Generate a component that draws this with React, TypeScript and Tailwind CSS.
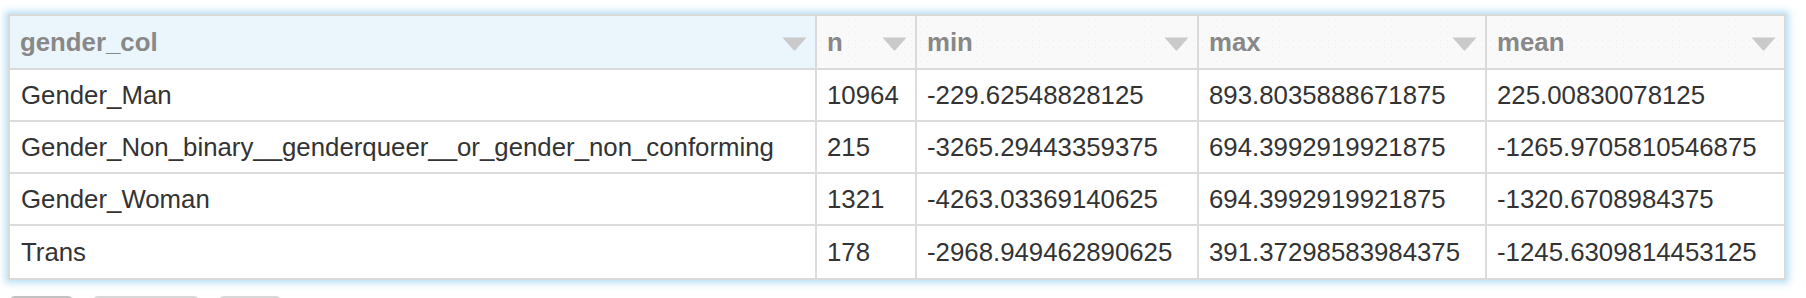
const columns = ["gender_col", "n", "min", "max", "mean"];

const rows: string[][] = [
  ["Gender_Man", "10964", "-229.62548828125", "893.8035888671875", "225.00830078125"],
  [
    "Gender_Non_binary__genderqueer__or_gender_non_conforming",
    "215",
    "-3265.29443359375",
    "694.3992919921875",
    "-1265.9705810546875",
  ],
  ["Gender_Woman", "1321", "-4263.03369140625", "694.3992919921875", "-1320.6708984375"],
  ["Trans", "178", "-2968.949462890625", "391.37298583984375", "-1245.6309814453125"],
];

const grid = "grid grid-cols-[805px_100px_282px_288px_299px]";

const SortArrow = () => (
  <svg width="25" height="14" viewBox="0 0 25 14" className="shrink-0 mt-[4px]">
    <path d="M0.5 0.5 H24.5 L13.5 13 Q12.5 14 11.5 13 Z" fill="#cacaca" />
  </svg>
);

export default function App() {
  return (
    <div className="min-h-screen bg-white font-['Liberation_Sans',Arial,sans-serif] text-[25.8px]">
      <div className="ml-[8px] pt-[14px] w-[1778px]">
        <div className="border-2 border-[#dadada] shadow-[0_0_7px_3px_rgba(160,214,240,0.75)]">
          {/* header */}
          <div className={`${grid} h-[54px] border-b-2 border-[#dadada]`}>
            {columns.map((col, i) => (
              <div
                key={col}
                className={`flex items-center justify-between pl-[10px] pr-[8px] font-bold text-[#888888] ${
                  i === 0
                    ? "bg-[#eaf5fc]"
                    : "border-l-2 border-[#dadada] bg-[#f9f9f9] bg-[radial-gradient(#ededed_0.5px,transparent_0.7px)] bg-[length:7px_7px]"
                }`}
              >
                <span>{col}</span>
                <SortArrow />
              </div>
            ))}
          </div>
          {/* body */}
          {rows.map((row, r) => (
            <div
              key={r}
              className={`${grid} h-[52px] ${r < rows.length - 1 ? "border-b-2 border-[#dcdcdc]" : ""}`}
            >
              {row.map((cell, c) => (
                <div
                  key={c}
                  className={`flex items-center pl-[10px] text-[#333333] whitespace-nowrap overflow-hidden ${
                    c > 0 ? "border-l-2 border-[#dcdcdc]" : "pl-[11px]"
                  }`}
                >
                  {cell}
                </div>
              ))}
            </div>
          ))}
        </div>
        {/* pager buttons */}
        <div className="flex gap-[18px] mt-[16px] ml-[1px]">
          <div className="w-[65px] h-[32px] rounded-[6px] border-2 border-[#c2c2c2] bg-[#e8e8e8]" />
          <div className="w-[108px] h-[32px] rounded-[6px] border-2 border-[#d8d8d8] bg-[#f4f4f4]" />
          <div className="w-[64px] h-[32px] rounded-[6px] border-2 border-[#d8d8d8] bg-[#f4f4f4]" />
        </div>
      </div>
    </div>
  );
}
